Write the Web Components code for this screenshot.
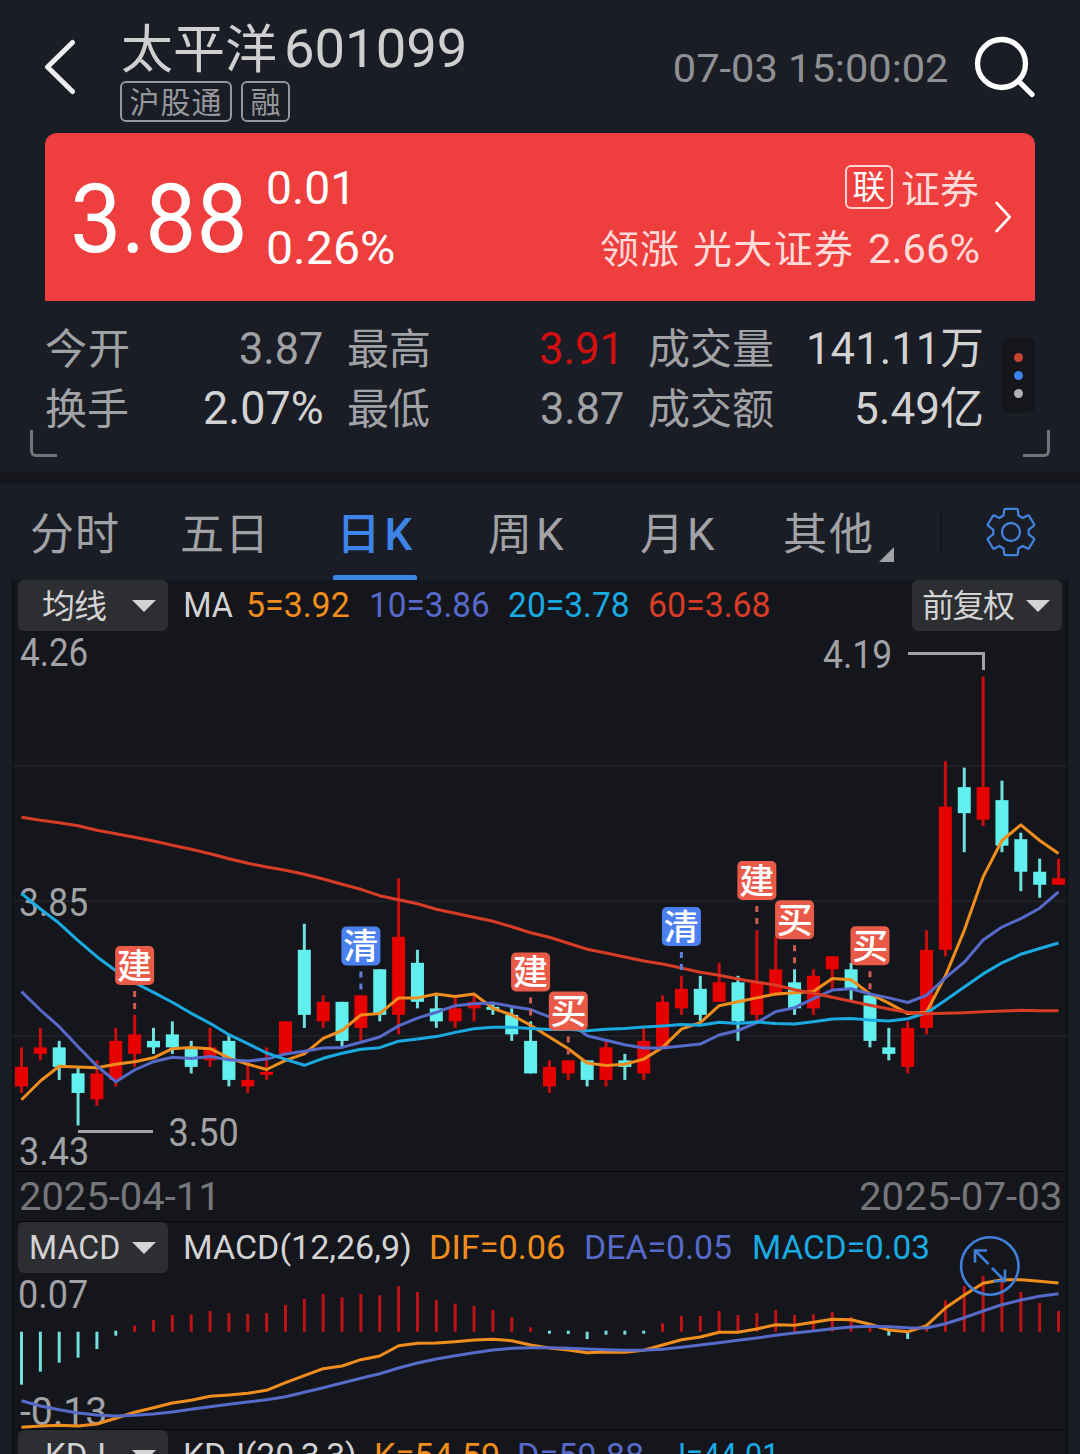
<!DOCTYPE html>
<html lang="zh-CN">
<head>
<meta charset="utf-8">
<title>太平洋 601099</title>
<style>
html,body{margin:0;padding:0;background:#1b1d26}
body{width:1080px;height:1454px;overflow:hidden;font-family:Roboto,"Noto Sans CJK SC",sans-serif;color:#a1a2a5}
</style>
</head>
<body>
<stock-page></stock-page>
<script>
const FONT = 'Roboto,"Noto Sans CJK SC",sans-serif';
const ctx = document.createElement('canvas').getContext('2d');
function ink(text, size, weight) {
  ctx.font = `${weight} ${size}px ${FONT}`;
  const m = ctx.measureText(text);
  return { left: -m.actualBoundingBoxLeft, right: m.actualBoundingBoxRight };
}
function define(name, html, after) {
  customElements.define(name, class extends HTMLElement {
    connectedCallback() {
      if (this.shadowRoot) return;
      this.attachShadow({ mode: 'open' }).innerHTML = html;
      if (after) after.call(this, this.shadowRoot);
    }
  });
}

/* One line of text fitted to a visible width of w pixels. */
customElements.define('fit-text', class extends HTMLElement {
  connectedCallback() {
    if (this.shadowRoot) return;
    const size = +this.getAttribute('size'), w = +this.getAttribute('w');
    const weight = this.getAttribute('weight') || 400;
    const text = this.textContent, box = ink(text, size, weight);
    const inkW = box.right - box.left;
    const dy = /[\u4e00-\u9fff]/.test(text[0]) ? size * .04 : 0;
    let style;
    if (this.hasAttribute('track')) {
      const ls = text.length > 1 ? (w - inkW) / (text.length - 1) : 0;
      style = `letter-spacing:${ls}px;transform:translate(${-box.left}px,${dy}px)`;
    } else {
      const s = w / inkW;
      style = `transform:translate(${-box.left * s}px,${dy}px) scaleX(${s})`;
    }
    this.attachShadow({ mode: 'open' }).innerHTML = `
      <style>:host{display:block;flex:none;width:${w}px;height:1.2em;line-height:1.2;font-size:${size}px;font-weight:${weight};white-space:nowrap}
      span{display:inline-block;transform-origin:0 50%;${style}}</style><span><slot></slot></span>`;
  }
});

define('quote-tag', `<style>
:host{display:flex;box-sizing:border-box;align-items:center;justify-content:center;height:41px;border:2px solid #96979a;border-radius:6px;color:#96979a}
</style><slot></slot>`);

define('quote-header', `<style>
:host{display:flex;height:133px;padding:0 45px;box-sizing:border-box}
svg{display:block;flex:none}
.back{margin-top:38px}
.name{margin-left:43px;padding-top:20px;flex:1}
.title{display:flex;align-items:center;height:58px;gap:12px;padding-left:4px;color:#cfcfd0}
.tags{display:flex;gap:9px;padding-top:3px;margin-left:2px}
.tags>:first-child{width:112px}.tags>:last-child{width:49px}
.time{margin-top:47px;margin-right:27px;color:#8f9093}
.search{margin-top:36px}
</style>
<svg class="back" width="30" height="58" viewBox="45 38 30 58" fill="none" stroke="#ededee" stroke-width="5" stroke-linecap="round" stroke-linejoin="round"><path d="M72.500 42.500L47.500 67L72.500 91.500"/></svg>
<div class="name">
<div class="title"><fit-text size="52" w="153" track>太平洋</fit-text><fit-text size="54" w="177">601099</fit-text></div>
<div class="tags"><quote-tag><fit-text size="30" w="91" track>沪股通</fit-text></quote-tag><quote-tag><fit-text size="30" w="28">融</fit-text></quote-tag></div>
</div>
<fit-text class="time" size="38" w="272">07-03 15:00:02</fit-text>
<svg class="search" width="61" height="62" viewBox="974 36 61 62" fill="none" stroke="#fff" stroke-width="5.300" stroke-linecap="round"><circle cx="1001.500" cy="63.500" r="24"/><path d="M1018.500 81L1032 94.500"/></svg>`);

define('price-card', `<style>
:host{display:flex;height:168px;margin:0 45px;padding:0 24px 0 29px;box-sizing:border-box;background:#ee3f3e;border-radius:12px 12px 0 0;color:#fff}
.big{margin-top:29px;margin-right:2px}
.chg{margin-left:23px;padding-top:25px;flex:1}
.row{display:flex;align-items:center;height:60px}
.sector{padding-top:25px;color:#ffdad9}
.sector .row{justify-content:flex-end}
b{display:flex;align-items:center;justify-content:center;box-sizing:border-box;width:48px;height:44px;border:2px solid #ffd5d4;border-radius:6px;margin:-3px 9px 0 0;color:#fff}
svg{display:block;margin:67px 0 0 16px}
</style>
<fit-text class="big" size="96" w="169">3.88</fit-text>
<div class="chg"><div class="row"><fit-text size="47" w="79">0.01</fit-text></div><div class="row"><fit-text size="47" w="126">0.26%</fit-text></div></div>
<div class="sector"><div class="row"><b><fit-text size="33" w="31">联</fit-text></b><fit-text size="39" w="77" track>证券</fit-text></div>
<div class="row" style="gap:16px"><fit-text size="39" w="77" track>领涨</fit-text><fit-text size="39" w="159" track>光大证券</fit-text><fit-text size="41" w="110" style="margin-top:3px">2.66%</fit-text></div></div>
<svg width="16" height="34" viewBox="995 200 16 34" fill="none" stroke="#fff" stroke-width="2.600" stroke-linecap="round" stroke-linejoin="round"><path d="M996.700 203L1009.700 217L996.700 231"/></svg>`);

define('quote-stats', `<style>
:host{display:flex;position:relative;height:171px;padding:17px 45px 0;box-sizing:border-box}
.g{display:grid;grid-template-rows:60px 60px;align-content:start;margin-right:26px}
.g>div{display:flex;justify-content:space-between;align-items:center}
.g>div>:last-child{margin-top:2px}
.g1{width:277px;margin-left:1px}.g1>div{padding-right:1px}.g2{width:275px;margin-right:26px}.g3{width:334px;margin-right:19px}
.l{color:#d2d2d3}.r{color:#d3100f}
.pill{box-sizing:border-box;width:33px;height:75px;margin-top:20px;border-radius:6px;background:#15161b;display:flex;flex-direction:column;align-items:center;justify-content:center;gap:9px}
i{display:block;width:9px;height:9px;border-radius:50%}
.c{position:absolute;top:129px;width:27px;height:27px;box-sizing:border-box;border:solid #727377;border-width:0 0 3px 3px;left:30px;border-radius:0 0 0 6px}
.c2{left:auto;right:30px;border-width:0 3px 3px 0;border-radius:0 0 6px 0}
</style>
<div class="g g1"><div><fit-text size="42" w="82" track>今开</fit-text><fit-text size="45" w="81">3.87</fit-text></div><div><fit-text size="42" w="82" track>换手</fit-text><fit-text class="l" size="46" w="117">2.07%</fit-text></div></div>
<div class="g g2" style="margin-left:-1px"><div><fit-text size="42" w="81" track>最高</fit-text><fit-text class="r" size="45" w="75" style="margin-right:7px">3.91</fit-text></div><div><fit-text size="42" w="81" track>最低</fit-text><fit-text size="45" w="81">3.87</fit-text></div></div>
<div class="g g3"><div><fit-text size="42" w="124" track>成交量</fit-text><fit-text class="l" size="44" w="173" style="margin-right:1px">141.11万</fit-text></div><div><fit-text size="42" w="124" track>成交额</fit-text><fit-text class="l" size="44" w="125" style="margin-right:1px">5.49亿</fit-text></div></div>
<div class="pill"><i style="background:#c8432f"></i><i style="background:#3a82ee"></i><i style="background:#aeafb1"></i></div>
<div class="c"></div><div class="c c2"></div>`);

define('period-tab', `<style>
:host{display:flex;flex-direction:column;flex:none;height:96px;align-items:center}
:host([active]){color:#3d84e8;width:84px}
slot{display:flex;align-items:center;height:96px;box-sizing:border-box;padding-top:2px}
u{display:none;width:84px;height:5px;border-radius:2.500px 2.500px 0 0;background:#3d84e8}
:host([active]) slot{height:91px;padding:7px 0 0 6px}
:host([active]) u{display:block}
</style><slot></slot><u></u>`);

define('period-tabs', `<style>
:host{display:flex;height:96px;border-top:12px solid #15161b;padding-left:31px}
svg{display:block;flex:none}
hr{margin:25px 0 0 46px;border:0;width:2px;height:45px;background:#15161b}
</style>
<period-tab><fit-text size="44" w="87" track>分时</fit-text></period-tab>
<period-tab style="margin-left:64px"><fit-text size="44" w="80" track>五日</fit-text></period-tab>
<period-tab active style="margin-left:71px"><fit-text size="44" w="69" weight="500" track>日K</fit-text></period-tab>
<period-tab style="margin-left:72px"><fit-text size="44" w="75" track>周K</fit-text></period-tab>
<period-tab style="margin-left:77px"><fit-text size="44" w="74" track>月K</fit-text></period-tab>
<period-tab style="margin-left:69px"><fit-text size="44" w="88" track>其他</fit-text></period-tab>
<svg width="15" height="15" style="margin:63px 0 0 7px"><path d="M15 0V15H0Z" fill="#a1a2a5"/></svg>
<hr>
<svg width="50" height="50" viewBox="986 507 50 50" style="margin:23px 0 0 44px" fill="none" stroke="#4183de" stroke-width="2.300" stroke-linejoin="round"><path d="M1005.500 508.800H1016.500Q1017.600 508.800 1017.800 510L1018.400 515.500L1022.800 518L1027.500 515.600Q1028.600 515.200 1029.200 516L1034 524Q1034.600 525 1033.700 525.800L1028.700 529.600V534.400L1033.700 538.200Q1034.600 539 1034 540L1029.200 548Q1028.600 548.800 1027.500 548.400L1022.800 546L1018.400 548.500L1017.800 554Q1017.600 555.200 1016.500 555.200H1005.500Q1004.400 555.200 1004.200 554L1003.600 548.500L999.200 546L994.500 548.400Q993.400 548.800 992.800 548L988 540Q987.400 539 988.300 538.200L993.300 534.400V529.600L988.300 525.800Q987.400 525 988 524L992.800 516Q993.400 515.200 994.500 515.600L999.200 518L1003.600 515.500L1004.200 510Q1004.400 508.800 1005.500 508.800Z"/><circle cx="1011" cy="532" r="9"/></svg>`);

define('drop-button', `<style>
:host{display:flex;box-sizing:border-box;flex:none;width:150px;height:51px;align-items:center;justify-content:flex-end;padding-right:12px;border-radius:6px;background:#2d2e32;color:#d3d3d4}
svg{display:block;margin-left:var(--gap,12px)}
</style><slot></slot><svg width="24" height="12"><path d="M0 0H24L12 12Z" fill="#d3d3d4"/></svg>`);

define('indicator-bar', `<style>
:host{display:flex;align-items:center;height:51px;padding:0 5px;color:#d3d3d4;position:relative}
</style><slot></slot>`);

const NS = 'http://www.w3.org/2000/svg';
const X = i => 21.5 + 18.855 * i;
function el(svg, tag, attrs, text) {
  const e = document.createElementNS(NS, tag);
  for (const k in attrs) e.setAttribute(k, attrs[k]);
  if (text) e.textContent = text;
  svg.appendChild(e);
  return e;
}
/* Text with its visible left edge at x, width w, digits centred on cy. */
function label(svg, text, x, w, cy, size, fill, weight = 400, rise = .356) {
  const b = ink(text, size, weight), s = w / (b.right - b.left);
  el(svg, 'text', { transform: `translate(${x - b.left * s} ${cy + size * rise}) scale(${s} 1)`, 'font-size': size, 'font-weight': weight, 'font-family': FONT, fill }, text);
}
function line(svg, ys, color) {
  el(svg, 'polyline', { points: ys.map((y, i) => X(i).toFixed(1) + ',' + y.toFixed(1)).join(' '), fill: 'none', stroke: color, 'stroke-width': 3, 'stroke-linejoin': 'round' });
}
const ORANGE = '#f08d1c', INDIGO = '#566aca', SKY = '#1aaae2', BRICK = '#d83c27', UP = '#e60000', DOWN = '#62f0ef';

/* high, body top, body bottom, low in ticks of 0.01 below 4.26; 1 = rising */
const CANDLES = [[64,67,70,71,1],[61,64,65,66,1],[63,64,67,69,0],[67,68,71,76,0],[66,68,72,73,1],[61,63,69,70,1],[59,62,65,67,1],[61,63,64,65,0],[60,62,64,65,0],[63,64,67,68,0],[61,64,66,67,1],[62,63,69,70,0],[66,69,70,71,1],[64,68,68,69,1],[60,60,65,65,1],[45,49,59,61,0],[56,57,60,61,1],[57,57,63,64,0],[56,56,61,63,1],[52,52,59,60,0],[38,47,59,62,1],[49,51,57,58,0],[56,58,60,61,0],[56,58,60,61,1],[56,57,58,60,1],[57,58,58,59,0],[58,59,62,63,0],[60,63,68,68,0],[66,67,70,71,1],[66,66,68,69,1],[66,66,69,70,0],[63,64,69,70,1],[65,66,67,69,0],[61,63,68,69,1],[56,57,64,64,1],[53,55,58,59,1],[53,55,59,60,0],[51,54,57,57,1],[53,54,60,63,0],[46,54,59,60,1],[47,52,56,56,1],[52,54,58,59,0],[52,53,58,59,1],[50,50,52,55,1],[51,52,55,57,0],[56,56,63,64,0],[61,64,65,66,0],[60,61,67,68,1],[46,49,61,62,1],[20,27,49,50,1],[21,24,28,34,0],[7,24,29,30,1],[23,26,33,34,0],[31,32,37,40,0],[35,37,39,41,0],[35,38,39,39,1]];
const Y = t => 631 + 6.506 * t;
const CLOSE = CANDLES.map(c => c[4] ? c[1] : c[2]);
function average(n, lead) {
  return CLOSE.map((_, i) => i < lead.length ? lead[i] : Y(CLOSE.slice(i - n + 1, i + 1).reduce((a, b) => a + b) / n));
}
const MARKS = [[6,'建',946],[18,'清',926.500],[27,'建',952.500],[29,'买',991.500],[35,'清',907],[39,'建',861],[41,'买',900.300],[45,'买',926.300]];

define('candle-chart', `<style>:host{display:block;height:540px}svg{display:block;overflow:visible}</style><svg width="1054" height="540" viewBox="13 631 1054 540"></svg>`, function (root) {
  const s = root.querySelector('svg'), G = '#a1a2a5';
  for (const y of [765, 900, 1035]) el(s, 'rect', { x: 13, y, width: 1054, height: 2, fill: '#1f2025' });
  label(s, '4.26', 20, 67, 652.5, 38, G);
  label(s, '3.85', 20, 67, 902, 38, G);
  label(s, '3.43', 20, 67, 1151.5, 38, G);
  label(s, '3.50', 169.500, 68, 1132.500, 38, G);
  label(s, '4.19', 823, 67, 654.5, 38, G);
  el(s, 'path', { d: 'M78 1131.500H153M908 653.500H983.500V670', stroke: '#a1a2a5', 'stroke-width': 3, fill: 'none' });
  CANDLES.forEach(([h, t, b, l, up], i) => {
    const x = X(i), flat = t === b;
    el(s, 'rect', { x: x - 1.5, y: Y(h), width: 3, height: Y(l) - Y(h), fill: up ? '#cb0c0e' : '#6fe0e0' });
    el(s, 'rect', { x: x - 6.5, y: Y(t) - (flat ? 1.5 : 0), width: 13, height: flat ? 3 : Y(b) - Y(t), fill: up ? UP : DOWN });
  });
  line(s, average(5, [1099.7, 1081, 1066.3, 1067, 1067.7]), ORANGE);
  line(s, average(10, [991.7, 1010, 1026.7, 1046.7, 1066, 1081.7, 1070, 1061.7, 1057.3]), INDIGO);
  line(s, average(20, [400,447,490,542,590,632,668,697,727,760,790,824,851,879,898,916,895,880,868].map(v => 760 + v / 3)), SKY);
  line(s, [172,181,188,197,211,221,232,243,256,268,281,296,310,321,331,343,357,373,388,407,419,431,448,460,472,484,500,518,532,550,568,579,591,603,612,624,637,646,657,667,675,689,700,712,724,736,747,757,761,760,758,755,753,751,752,752].map(v => 760 + v / 3), BRICK);
  for (const [i, ch, y] of MARKS) {
    const x = X(i), c = ch === '清' ? '#4b80f0' : '#e95b48';
    el(s, 'path', { d: `M${x} ${y + 45}v6m0 6v6`, stroke: ch === '清' ? '#5980dc' : '#cf5d50', 'stroke-width': 3 });
    el(s, 'rect', { x: x - 19.5, y, width: 39, height: 39, rx: 5, fill: c });
    label(s, ch, x - 16.7, 33, y + 19.5, 35, '#fff', 500, .38);
  }
});

define('macd-chart', `<style>:host{display:block;height:156px}svg{display:block;overflow:visible}</style><svg width="1054" height="156" viewBox="13 1273 1054 156"></svg>`, function (root) {
  const s = root.querySelector('svg'), Z = 1331.7, py = v => 1160 + v / 3;
  label(s, '0.07', 20, 67, 1294, 38, '#a1a2a5');
  label(s, '-0.13', 20, 85, 1411, 38, '#a1a2a5');
  const ends = [674,635,608,593,567,530,497,480,465,463,453,459,462,459,435,417,402,412,402,406,378,396,419,431,438,450,471,502,520,525,537,527,527,520,490,468,468,453,465,459,450,465,463,456,471,500,530,537,497,421,378,348,360,396,429,453];
  ends.forEach((v, i) => {
    const y = py(v), up = v < 515, h = Math.max(3, Math.abs(y - Z));
    el(s, 'rect', { x: X(i) - 1.5, y: up ? Z - h : Z - (h < 5 ? 1 : 0), width: 3, height: h, fill: up ? '#bd1316' : '#72dede' });
  });
  line(s, [802,798,796,798,792,775,757,743,729,721,709,705,700,691,668,647,626,618,599,588,557,550,549,545,540,538,542,555,564,570,578,576,577,571,555,539,531,517,517,507,494,496,487,478,479,493,510,515,497,444,405,370,359,359,364,369].map(py), ORANGE);
  line(s, [722,738,749,759,765,768,766,762,756,748,740,733,726,719,710,697,683,669,655,641,624,609,597,587,578,570,565,563,563,565,567,569,571,571,568,562,555,548,541,534,526,519,513,506,501,499,500,503,504,491,473,453,434,420,409,401].map(py), INDIGO);
});

define('expand-button', `<style>:host{position:absolute;left:946px;top:13px;width:62px;height:62px;z-index:1}svg{display:block}</style>
<svg width="62" height="62" viewBox="959 1235 62 62" fill="none" stroke="#4080da" stroke-width="2.600"><circle cx="989.800" cy="1266" r="28.700"/><path d="M987 1250.500H975V1262.500M975 1250.500L988.500 1264M992 1268L1005.500 1281.500M1005 1269.500V1281H993.500"/></svg>`);

define('chart-panel', `<style>
:host{display:block;margin:0 12px;background:#15161b;border:solid #0b0c10;border-width:0 1px;height:874px;overflow:hidden}
.dates{display:flex;justify-content:space-between;align-items:center;height:51px;padding:3px 7px 0;box-sizing:border-box;border:solid #08090c;border-width:1px 0;color:#75767a}
.line{height:1px;background:#08090c}
indicator-bar>fit-text{margin-left:20px}
indicator-bar>fit-text.first{margin-left:17px;margin-right:-5px}
</style>
<indicator-bar><drop-button style="--gap:26px"><fit-text size="33" w="63" track>均线</fit-text></drop-button>
<fit-text class="first" size="35" w="48">MA</fit-text>
<fit-text size="35" w="101" style="color:#f08d1c">5=3.92</fit-text>
<fit-text size="35" w="117" style="color:#566aca;margin-left:22px">10=3.86</fit-text>
<fit-text size="35" w="119" style="color:#1aaae2;margin-left:21px">20=3.78</fit-text>
<fit-text size="35" w="119" style="color:#d83c27;margin-left:22px">60=3.68</fit-text>
<drop-button style="margin-left:auto"><fit-text size="32" w="91" track>前复权</fit-text></drop-button></indicator-bar>
<candle-chart></candle-chart>
<div class="dates"><fit-text size="38" w="193">2025-04-11</fit-text><fit-text size="38" w="200">2025-07-03</fit-text></div>
<indicator-bar><drop-button style="--gap:13px"><fit-text size="34" w="88">MACD</fit-text></drop-button>
<fit-text class="first" size="34" w="225">MACD(12,26,9)</fit-text>
<fit-text size="34" w="133" style="color:#f08d1c;margin-left:26px">DIF=0.06</fit-text>
<fit-text size="34" w="145" style="color:#566aca;margin-left:22px">DEA=0.05</fit-text>
<fit-text size="34" w="174" style="color:#1aaae2;margin-left:23px">MACD=0.03</fit-text>
<expand-button></expand-button></indicator-bar>
<macd-chart></macd-chart>
<div class="line"></div>
<indicator-bar><drop-button style="--gap:28px"><fit-text size="34" w="57">KDJ</fit-text></drop-button>
<fit-text class="first" size="34" w="170">KDJ(20,3,3)</fit-text>
<fit-text size="34" w="122" style="color:#f08d1c;margin-left:26px">K=54.59</fit-text>
<fit-text size="34" w="124" style="color:#566aca;margin-left:21px">D=59.88</fit-text>
<fit-text size="34" w="105" style="color:#1aaae2;margin-left:26px">J=44.01</fit-text></indicator-bar>`);

define('stock-page', `<style>:host{display:block;width:1080px;height:1454px;overflow:hidden}</style>
<quote-header></quote-header><price-card></price-card><quote-stats></quote-stats><period-tabs></period-tabs><chart-panel></chart-panel>`);
</script>
</body>
</html>
